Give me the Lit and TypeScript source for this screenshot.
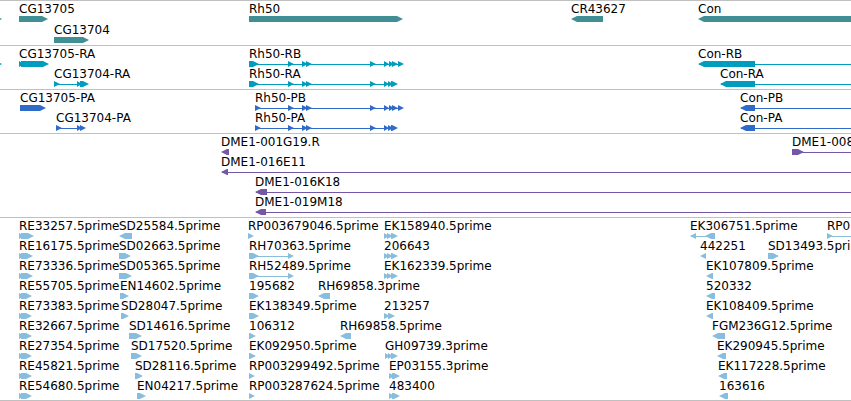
import { LitElement, html, svg, css } from "lit";
import { customElement, property } from "lit/decorators.js";

type Strand = 1 | -1;
type Block = [from: number, to: number];

interface Feature {
  label: string;
  strand: Strand;
  blocks: Block[];
  // far end of the intron line when it runs on past the last block
  until?: number;
}

interface Track {
  name: string;
  kind: "gene" | "transcript" | "protein" | "bac" | "est";
  rows: Feature[][];
}

const OFF = 1200;
const fwd = (label: string, ...blocks: Block[]): Feature => ({ label, strand: 1, blocks });
const rev = (label: string, ...blocks: Block[]): Feature => ({ label, strand: -1, blocks });
const open = (f: Feature): Feature => ({ ...f, until: OFF });

const rhMiddle: Block[] = [[288, 294], [302, 308], [306, 312], [370, 376], [384, 389]];
const rhLong: Block[] = [...rhMiddle, [389, 394], [392, 398], [398, 404]];
const rhShort: Block[] = [...rhMiddle, [388, 393], [391, 398]];
const trio: Block[] = [[384, 389], [387, 393], [391, 398]];

const tracks: Track[] = [
  {
    name: "Genes",
    kind: "gene",
    rows: [
      [
        fwd("", [-20, 2]),
        fwd("CG13705", [19, 48]),
        fwd("Rh50", [249, 403]),
        rev("CR43627", [571, 603]),
        rev("Con", [698, OFF]),
      ],
      [fwd("CG13704", [54, 89])],
    ],
  },
  {
    name: "Transcripts",
    kind: "transcript",
    rows: [
      [
        fwd("", [-20, 2]),
        fwd("CG13705-RA", [19, 24], [21, 49]),
        fwd("Rh50-RB", [249, 259], ...rhLong),
        open(rev("Con-RB", [698, 755])),
      ],
      [
        fwd("CG13704-RA", [54, 60], [77, 82], [80, 89]),
        fwd("Rh50-RA", [249, 259], ...rhShort),
        open(rev("Con-RA", [720, 755])),
      ],
    ],
  },
  {
    name: "Proteins",
    kind: "protein",
    rows: [
      [
        fwd("CG13705-PA", [20, 46]),
        fwd("Rh50-PB", [255, 261], ...rhLong),
        open(rev("Con-PB", [740, 755])),
      ],
      [
        fwd("CG13704-PA", [56, 62], [77, 82], [80, 86]),
        fwd("Rh50-PA", [255, 261], ...rhShort),
        open(rev("Con-PA", [740, 755])),
      ],
    ],
  },
  {
    name: "BACs",
    kind: "bac",
    rows: [
      [rev("DME1-001G19.R", [221, 229]), open(fwd("DME1-008", [792, 804]))],
      [open(rev("DME1-016E11", [221, 228]))],
      [open(rev("DME1-016K18", [255, 267]))],
      [open(rev("DME1-019M18", [255, 266]))],
    ],
  },
  {
    name: "Expressed sequences",
    kind: "est",
    rows: [
      [
        fwd("RE33257.5prime", [19, 25], [21, 34]),
        rev("SD25584.5prime", [119, 132]),
        fwd("RP003679046.5prime", [248, 254]),
        fwd("EK158940.5prime", ...trio),
        rev("EK306751.5prime", [690, 696], [705, 715]),
        open(fwd("RP0", [827, 833])),
      ],
      [
        fwd("RE16175.5prime", [19, 25], [21, 33]),
        fwd("SD02663.5prime", [119, 131]),
        fwd("RH70363.5prime", [249, 259], [288, 294]),
        fwd("206643", ...trio),
        rev("442251", [700, 706]),
        fwd("SD13493.5prime", [768, 779]),
      ],
      [
        fwd("RE73336.5prime", [19, 25], [21, 33]),
        fwd("SD05365.5prime", [119, 132]),
        fwd("RH52489.5prime", [249, 259], [288, 294]),
        fwd("EK162339.5prime", ...trio),
        rev("EK107809.5prime", [706, 713]),
      ],
      [
        fwd("RE55705.5prime", [19, 25], [21, 32]),
        fwd("EN14602.5prime", [120, 129]),
        fwd("195682", [249, 259]),
        rev("RH69858.3prime", [318, 330]),
        rev("520332", [706, 715]),
      ],
      [
        fwd("RE73383.5prime", [19, 25], [21, 32]),
        fwd("SD28047.5prime", [121, 129]),
        fwd("EK138349.5prime", [249, 259]),
        fwd("213257", [384, 390], [388, 395]),
        rev("EK108409.5prime", [706, 713]),
      ],
      [
        fwd("RE32667.5prime", [19, 25], [21, 32]),
        fwd("SD14616.5prime", [129, 142]),
        fwd("106312", [249, 256]),
        rev("RH69858.5prime", [340, 351]),
        rev("FGM236G12.5prime", [712, 725]),
      ],
      [
        fwd("RE27354.5prime", [19, 25], [21, 32]),
        fwd("SD17520.5prime", [131, 142]),
        fwd("EK092950.5prime", [249, 256]),
        fwd("GH09739.3prime", [385, 390], [388, 393], [391, 398]),
        rev("EK290945.5prime", [717, 726]),
      ],
      [
        fwd("RE45821.5prime", [19, 25], [21, 32]),
        fwd("SD28116.5prime", [135, 143]),
        fwd("RP003299492.5prime", [249, 255]),
        fwd("EP03155.3prime", [389, 395], [392, 400]),
        rev("EK117228.5prime", [718, 727]),
      ],
      [
        fwd("RE54680.5prime", [19, 25], [21, 32]),
        fwd("EN04217.5prime", [137, 146]),
        fwd("RP003287624.5prime", [249, 255]),
        fwd("483400", [389, 395], [392, 400]),
        rev("163616", [719, 728]),
      ],
    ],
  },
];

@customElement("feature-glyph")
export class FeatureGlyph extends LitElement {
  @property({ attribute: false }) feature!: Feature;

  static styles = css`
    :host {
      display: block;
    }
    .label {
      display: block;
      height: 15px;
      white-space: nowrap;
    }
    .shape {
      display: block;
      height: 6px;
      fill: currentColor;
      color: var(--feature-color);
    }
  `;

  private block([from, to]: Block, origin: number) {
    const a = from - origin;
    const b = to - origin;
    const head = Math.min(6, b - a);
    const points =
      this.feature.strand === 1
        ? `${a},0 ${b - head},0 ${b},3 ${b - head},6 ${a},6`
        : `${b},0 ${a + head},0 ${a},3 ${a + head},6 ${b},6`;
    return svg`<polygon points=${points}></polygon>`;
  }

  render() {
    const { label, blocks, until } = this.feature;
    const start = blocks[0][0];
    const last = blocks[blocks.length - 1][1];
    const end = until ?? last;
    const lineEnd = until ? end - start : end - start - 3;
    const hasLine = until !== undefined || blocks.length > 1;
    return html`
      <span class="label">${label}</span>
      <svg class="shape" width=${end - start} height="6" aria-hidden="true">
        ${hasLine
          ? svg`<rect x="1" y="3" width=${lineEnd - 1} height="1"></rect>`
          : null}
        ${blocks.map((b) => this.block(b, start))}
      </svg>
    `;
  }
}

@customElement("app-root")
export class AppRoot extends LitElement {
  static styles = css`
    :host {
      display: block;
      overflow: hidden;
      background: #fff;
      color: #000;
      font: 12px/17px "DejaVu Sans", sans-serif;
      border-bottom: 1px solid #c0c0c0;
    }
    .track {
      border-top: 1px solid #c0c0c0;
      padding-bottom: 3px;
    }
    .row {
      position: relative;
      height: 20px;
      margin: 0;
      padding: 0;
      list-style: none;
    }
    .feature {
      position: absolute;
      top: 0;
    }
    .gene {
      --feature-color: #408f94;
      padding-bottom: 2px;
    }
    .gene .row {
      height: 21px;
    }
    .transcript {
      --feature-color: #009dbf;
    }
    .protein {
      --feature-color: #316bca;
    }
    .bac {
      --feature-color: #7557a8;
    }
    .est {
      --feature-color: #88bdde;
      padding-bottom: 2px;
    }
  `;

  render() {
    return html`
      <main>
        ${tracks.map(
          (track) => html`
            <section class="track ${track.kind}" aria-label=${track.name}>
              ${track.rows.map(
                (row) => html`
                  <ul class="row">
                    ${row.map(
                      (f) => html`
                        <li class="feature" style="left:${f.blocks[0][0]}px">
                          <feature-glyph .feature=${f}></feature-glyph>
                        </li>
                      `
                    )}
                  </ul>
                `
              )}
            </section>
          `
        )}
      </main>
    `;
  }
}
